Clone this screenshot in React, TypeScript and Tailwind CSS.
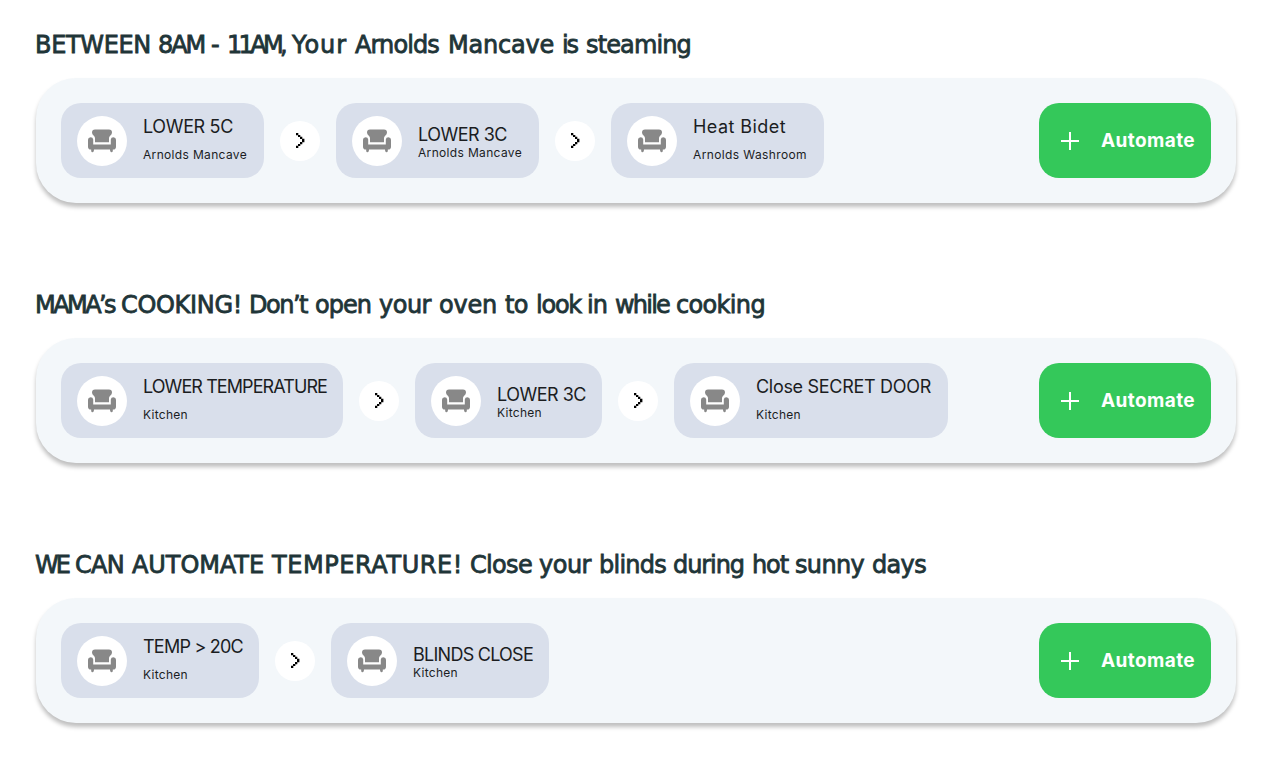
import { useLayoutEffect, useRef } from "react";

type FitProps = { text: string; width: number; className?: string };

// Tracks a run of text so that it fills the given width exactly.
function FitText({ text, width, className = "" }: FitProps) {
  const ref = useRef<HTMLSpanElement>(null);
  useLayoutEffect(() => {
    const el = ref.current;
    if (!el) return;
    el.style.letterSpacing = "0px";
    const natural = el.getBoundingClientRect().width;
    el.style.letterSpacing = `${(width - natural) / text.length}px`;
  }, [text, width]);
  return (
    <span className="block overflow-visible whitespace-nowrap" style={{ width }}>
      <span ref={ref} className={`block w-fit ${className}`}>{text}</span>
    </span>
  );
}

type Step = { title: string; titleWidth: number; room: string; roomWidth: number; width: number };
type Word = [text: string, start: number, width: number];
type Routine = { heading: Word[]; steps: Step[] };

const routines: Routine[] = [
  {
    heading: [
      ["BETWEEN", 0, 116], ["8AM", 123, 46], ["-", 176, 8], ["11AM,", 192, 57], ["Your", 257, 55],
      ["Arnolds", 320, 84], ["Mancave", 413, 106], ["is", 527, 15], ["steaming", 551, 105],
    ],
    steps: [
      { title: "LOWER 5C", titleWidth: 90, room: "Arnolds Mancave", roomWidth: 104, width: 203 },
      { title: "LOWER 3C", titleWidth: 89, room: "Arnolds Mancave", roomWidth: 104, width: 203 },
      { title: "Heat Bidet", titleWidth: 93, room: "Arnolds Washroom", roomWidth: 114, width: 213 },
    ],
  },
  {
    heading: [
      ["MAMA’s", 0, 79], ["COOKING!", 86, 121], ["Don’t", 214, 58], ["open", 280, 56], ["your", 344, 52],
      ["oven", 404, 58], ["to", 470, 23], ["look", 501, 45], ["in", 552, 20], ["while", 580, 54], ["cooking", 641, 89],
    ],
    steps: [
      { title: "LOWER TEMPERATURE", titleWidth: 184, room: "Kitchen", roomWidth: 45, width: 282 },
      { title: "LOWER 3C", titleWidth: 89, room: "Kitchen", roomWidth: 45, width: 187 },
      { title: "Close SECRET DOOR", titleWidth: 175, room: "Kitchen", roomWidth: 45, width: 274 },
    ],
  },
  {
    heading: [
      ["WE", 0, 33], ["CAN", 40, 49], ["AUTOMATE", 97, 132], ["TEMPERATURE!", 237, 191], ["Close", 435, 62],
      ["your", 504, 52], ["blinds", 564, 67], ["during", 638, 71], ["hot", 717, 36], ["sunny", 760, 69], ["days", 837, 54],
    ],
    steps: [
      { title: "TEMP > 20C", titleWidth: 100, room: "Kitchen", roomWidth: 45, width: 198 },
      { title: "BLINDS CLOSE", titleWidth: 120, room: "Kitchen", roomWidth: 45, width: 218 },
    ],
  },
];

function Armchair() {
  return (
    <svg width="28" height="24" viewBox="0 0 28 24" fill="#888888">
      <path d="M7 .6H21Q24 .6 24 3.6Q24 5.6 22.2 6.8Q21.2 7.6 21 9V13.2H7V9Q6.8 7.6 5.8 6.8Q4 5.6 4 3.6Q4 .6 7 .6Z" />
      <path d="M2.6 8.2Q5 8.2 5.2 10.6V15.6H22.8V10.6Q23 8.2 25.4 8.2Q28 8.4 28 10.8V17.8Q28 20.6 25.2 20.6H24.8V22Q24.6 23.2 23.6 23.2Q22.6 23.2 22.2 22L22 20.6H6L5.8 22Q5.4 23.2 4.4 23.2Q3.4 23.2 3.2 22V20.6H2.8Q0 20.6 0 17.8V10.8Q0 8.4 2.6 8.2Z" />
    </svg>
  );
}

function Chevron() {
  return (
    <svg className="ml-px" width="9" height="15" viewBox="0 0 9 15" fill="#000">
      <path d="M0 0H2.3V1.9H4.3V3.8H6.3V5.7H8.4V9.3H6.3V11.2H4.3V13.1H2.3V15H0V12.8H2V10.9H4V9H6V6H4V4.1H2V2.2H0Z" />
    </svg>
  );
}

function StepCard({ step, compact }: { step: Step; compact: boolean }) {
  return (
    <div className="flex h-[75px] shrink-0 items-center gap-4 rounded-[20px] bg-[#d9dfeb] pl-4" style={{ width: step.width }}>
      <div className="flex size-[50px] shrink-0 items-center justify-center rounded-full bg-white">
        <Armchair />
      </div>
      <div className={compact ? "pt-[7px] text-[#1b1d1f]" : "flex flex-col gap-[10px] text-[#1b1d1f]"}>
        <FitText text={step.title} width={step.titleWidth} className="text-[18px] leading-[18px]" />
        <FitText text={step.room} width={step.roomWidth} className="text-[12px] leading-[18px]" />
      </div>
    </div>
  );
}

export default function App() {
  return (
    <main className="flex h-[759px] w-[1272px] flex-col overflow-hidden bg-white pl-9 pt-[31px] font-['Inter',sans-serif]">
      {routines.map((routine, i) => (
        <section key={i} className="h-[260px] shrink-0">
          <h2 className="-ml-px flex h-7 font-['DejaVu_Sans',sans-serif] text-[24px] leading-7 text-[#1f3538]">
            {routine.heading.map(([text, start, width], n) => {
              const next = routine.heading[n + 1];
              return (
                <span key={n} style={{ width: next ? next[1] - start : width }}>
                  <FitText text={text} width={width} className="[-webkit-text-stroke:0.8px_#1f3538]" />
                </span>
              );
            })}
          </h2>
          <div className="mt-[19px] flex h-[125px] w-[1200px] items-center justify-between rounded-[40px] bg-[#f3f7fa] px-[25px] shadow-[0_4px_4px_rgba(0,0,0,0.25)]">
            <div className="flex items-center gap-4">
              {routine.steps.map((step, n) => (
                <div key={n} className="flex items-center gap-4">
                  {n > 0 && (
                    <div className="flex size-10 items-center justify-center rounded-full bg-white">
                      <Chevron />
                    </div>
                  )}
                  <StepCard step={step} compact={n === 1} />
                </div>
              ))}
            </div>
            <button className="flex h-[75px] w-[172px] items-center rounded-[20px] bg-[#34c85a] pl-[22px] text-white">
              <svg width="18" height="18" viewBox="0 0 18 18" stroke="#fff" strokeWidth="2">
                <path d="M9 0V18M0 9H18" />
              </svg>
              <span className="w-[22px]" />
              <FitText text="Automate" width={94} className="text-[19px] font-bold leading-[27px]" />
            </button>
          </div>
        </section>
      ))}
    </main>
  );
}
